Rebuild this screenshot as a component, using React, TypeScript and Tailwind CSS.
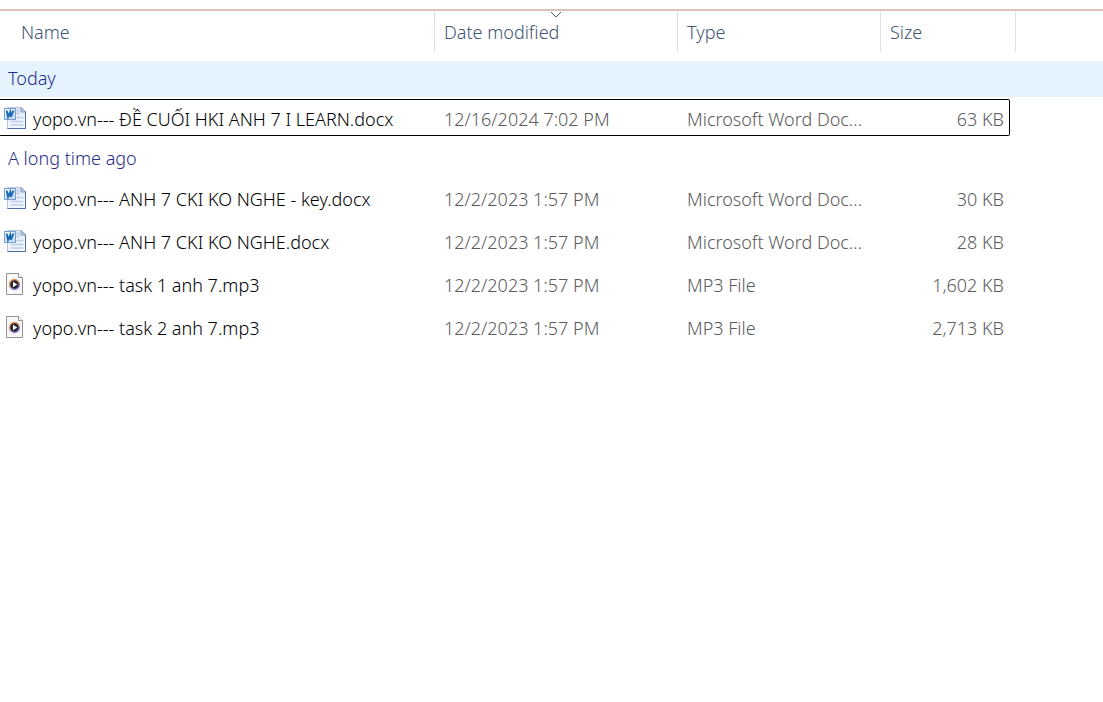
type FileKind = 'word' | 'audio'

interface FileEntry {
  name: string
  modified: string
  type: string
  size: string
  kind: FileKind
  focused?: boolean
}

interface FileGroup {
  label: string
  highlighted?: boolean
  files: FileEntry[]
}

const groups: FileGroup[] = [
  {
    label: 'Today',
    highlighted: true,
    files: [
      {
        name: 'yopo.vn--- ĐỀ CUỐI HKI ANH 7 I LEARN.docx',
        modified: '12/16/2024 7:02 PM',
        type: 'Microsoft Word Doc...',
        size: '63 KB',
        kind: 'word',
        focused: true,
      },
    ],
  },
  {
    label: 'A long time ago',
    files: [
      { name: 'yopo.vn--- ANH 7 CKI KO NGHE - key.docx', modified: '12/2/2023 1:57 PM', type: 'Microsoft Word Doc...', size: '30 KB', kind: 'word' },
      { name: 'yopo.vn--- ANH 7 CKI KO NGHE.docx', modified: '12/2/2023 1:57 PM', type: 'Microsoft Word Doc...', size: '28 KB', kind: 'word' },
      { name: 'yopo.vn--- task 1 anh 7.mp3', modified: '12/2/2023 1:57 PM', type: 'MP3 File', size: '1,602 KB', kind: 'audio' },
      { name: 'yopo.vn--- task 2 anh 7.mp3', modified: '12/2/2023 1:57 PM', type: 'MP3 File', size: '2,713 KB', kind: 'audio' },
    ],
  },
]

function WordIcon() {
  return (
    <svg className="h-6 w-6 shrink-0" viewBox="0 0 24 24" aria-hidden="true">
      <defs>
        <linearGradient id="word-page" x1="0" y1="0" x2="0" y2="1">
          <stop offset="0" stopColor="#e3ebf7" />
          <stop offset="1" stopColor="#f4f8fd" />
        </linearGradient>
        <linearGradient id="word-badge" x1="0" y1="0" x2="1" y2="1">
          <stop offset="0" stopColor="#f5faff" />
          <stop offset="1" stopColor="#b9d7f3" />
        </linearGradient>
      </defs>
      <path d="M3.5 1.5h14l4 4v17h-18z" fill="url(#word-page)" stroke="#b4c7e2" />
      <path d="M21.5 5.5v17h-18" fill="none" stroke="#4a6fae" />
      <path d="M17 1.5v4.5h4.5z" fill="#c3d1e8" stroke="#8199c3" />
      <path d="M12.5 4.5h3M12.5 7.5h3" stroke="#b7c9e6" strokeWidth="2" />
      <path d="M12.5 11.5h7M6.5 15.5h13M6.5 19h13" stroke="#bccfea" strokeWidth="1.3" />
      <rect x="0.5" y="2.5" width="11" height="11" fill="url(#word-badge)" stroke="#7a9fd0" />
      <path d="M2.6 4.6l1.4 6.4 2.2-5 .6 5 2.6-6.4" fill="none" stroke="#1767b3" strokeWidth="1.9" />
    </svg>
  )
}

function AudioIcon() {
  return (
    <svg className="h-6 w-6 shrink-0" viewBox="0 0 24 24" aria-hidden="true">
      <defs>
        <linearGradient id="audio-ring" x1="0" y1="0" x2="0.4" y2="1">
          <stop offset="0" stopColor="#ef8a3c" />
          <stop offset="0.5" stopColor="#d9a07c" />
          <stop offset="1" stopColor="#9a84d8" />
        </linearGradient>
      </defs>
      <path d="M2.5 1.5h12l4 4v17h-16z" fill="#f8f8f8" stroke="#929292" />
      <path d="M14.5 1.5v4h4" fill="#ffffff" stroke="#929292" />
      <circle cx="10.5" cy="12.5" r="5" fill="#252530" stroke="url(#audio-ring)" strokeWidth="1.4" />
      <path d="M9 9.8v5.4l4.3-2.7z" fill="#ffffff" />
    </svg>
  )
}

function HeaderCell({ label, sorted = false, first = false }: { label: string; sorted?: boolean; first?: boolean }) {
  return (
    <th scope="col" aria-sort={sorted ? 'descending' : undefined} className="h-[50px] p-0 pb-[9px] font-[350]">
      <button
        type="button"
        className={`relative flex h-[41px] w-full items-center border-r border-[#e2e2e2] text-left text-[#3f5573] ${first ? 'pl-[21px]' : 'pl-[9px]'}`}
      >
        {label}
        {sorted && (
          <svg className="absolute top-0 left-1/2 h-[7px] w-3 -translate-x-1/2" viewBox="0 0 12 7" aria-hidden="true">
            <path d="M1 1l5 5 5-5" fill="none" stroke="#555555" />
          </svg>
        )}
      </button>
    </th>
  )
}

function FileRow({ file }: { file: FileEntry }) {
  return (
    <tr className="relative h-[43px] text-[#5a5a5a]">
      <td className="p-0 pb-0.5 pl-1">
        {file.focused && (
          <span className="pointer-events-none absolute top-0.5 left-0 h-[37px] w-[1010px] rounded-r-xs border border-l-0 border-black" />
        )}
        <span className="flex items-center gap-[5px] text-black">
          {file.kind === 'word' ? <WordIcon /> : <AudioIcon />}
          <span className="pt-0.5 whitespace-nowrap">{file.name}</span>
        </span>
      </td>
      <td className="p-0 pl-[9px] whitespace-nowrap">{file.modified}</td>
      <td className="p-0 pl-[9px] whitespace-nowrap">{file.type}</td>
      <td className="p-0 pr-3 text-right whitespace-nowrap">{file.size}</td>
      <td className="p-0" />
    </tr>
  )
}

export default function App() {
  return (
    <main className="min-h-screen overflow-x-auto bg-white pt-[9px] font-['Noto_Sans','Open_Sans',sans-serif] text-lg leading-6 font-[350]">
      <table className="w-full min-w-[1016px] table-fixed border-collapse border-t-2 border-[#dbc3b7]">
        <colgroup>
          <col className="w-[435px]" />
          <col className="w-[243px]" />
          <col className="w-[203px]" />
          <col className="w-[135px]" />
          <col />
        </colgroup>
        <thead>
          <tr>
            <HeaderCell label="Name" first />
            <HeaderCell label="Date modified" sorted />
            <HeaderCell label="Type" />
            <HeaderCell label="Size" />
            <td className="p-0" />
          </tr>
        </thead>
        {groups.map((group) => (
          <tbody key={group.label}>
            <tr className={group.highlighted ? 'h-9 bg-[#e5f3ff]' : 'h-[37px]'}>
              <th scope="rowgroup" colSpan={5} className="p-0 pb-0.5 pl-2 text-left font-[350] text-[#1f2f8c]">
                {group.label}
              </th>
            </tr>
            {group.files.map((file) => (
              <FileRow key={file.name} file={file} />
            ))}
          </tbody>
        ))}
      </table>
    </main>
  )
}
